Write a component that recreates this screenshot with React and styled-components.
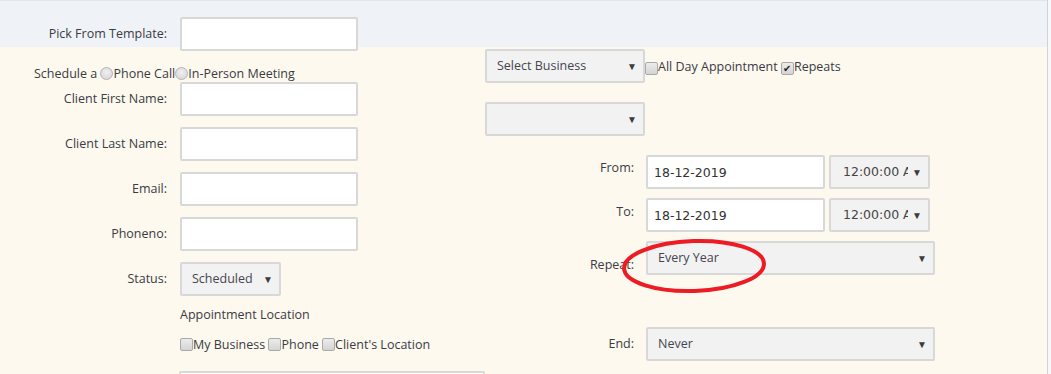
import React from 'react'
import styled, { createGlobalStyle } from 'styled-components'

const GlobalStyle = createGlobalStyle`
  html, body {
    margin: 0;
    overflow: hidden;
  }
  body {
    font-family: "Open Sans", "Noto Sans", sans-serif;
    font-size: 12.5px;
    color: #3b3b44;
  }
`

const Select = ({ width, children }) => (
  <SelectBox width={width}>
    <SelectText>{children}</SelectText>
    <Arrow>▼</Arrow>
  </SelectBox>
)

const App = () => {
  return (
    <Page>
      <GlobalStyle />
      <Main>
        <LeftCol>
          <FieldRow>
            <Label>Pick From Template:</Label>
            <TextInput />
          </FieldRow>
          <ScheduleLine>
            Schedule a&nbsp;<Radio />Phone Call<Radio />In-Person Meeting
          </ScheduleLine>
          <FieldRow>
            <Label>Client First Name:</Label>
            <TextInput />
          </FieldRow>
          <FieldRow gap={11}>
            <Label>Client Last Name:</Label>
            <TextInput />
          </FieldRow>
          <FieldRow gap={11}>
            <Label>Email:</Label>
            <TextInput />
          </FieldRow>
          <FieldRow gap={11}>
            <Label>Phoneno:</Label>
            <TextInput />
          </FieldRow>
          <FieldRow gap={11}>
            <Label>Status:</Label>
            <Select width={101}>Scheduled</Select>
          </FieldRow>
          <Indented gap={9}>Appointment Location</Indented>
          <Indented gap={12}>
            <Check />My Business <Check />Phone <Check />Client's Location
          </Indented>
          <WideInput />
        </LeftCol>

        <RightCol>
          <BusinessRow>
            <Select width={160}>Select Business</Select>
            <Check />All Day Appointment <Check checked />Repeats
          </BusinessRow>
          <EmptyRow>
            <Select width={160} />
          </EmptyRow>
          <RightRow gap={19}>
            <RightLabel offset={4}>From:</RightLabel>
            <Pair>
              <DateInput>18-12-2019</DateInput>
              <Select width={101}>
                <TimeText>12:00:00 AM</TimeText>
              </Select>
            </Pair>
          </RightRow>
          <RightRow gap={9}>
            <RightLabel offset={5}>To:</RightLabel>
            <Pair>
              <DateInput>18-12-2019</DateInput>
              <Select width={101}>
                <TimeText>12:00:00 AM</TimeText>
              </Select>
            </Pair>
          </RightRow>
          <RightRow gap={9}>
            <RightLabel offset={15}>Repeat:</RightLabel>
            <Select width={289}>Every Year</Select>
          </RightRow>
          <RightRow gap={52}>
            <RightLabel offset={8}>End:</RightLabel>
            <Select width={289}>Never</Select>
          </RightRow>
        </RightCol>

        <Circle viewBox="0 0 150 60">
          <ellipse
            cx="75"
            cy="30"
            rx="70"
            ry="25"
            fill="none"
            stroke="#ed1c24"
            strokeWidth="4"
          />
        </Circle>
      </Main>
      <Side />
    </Page>
  )
}

const Page = styled.div`
  display: flex;
  height: 374px;
  overflow: hidden;
`

const Main = styled.div`
  position: relative;
  flex: 0 0 1047px;
  box-sizing: border-box;
  border-top: 1px solid #e3e7eb;
  background: linear-gradient(#eff3f7 0, #eff3f7 46px, #fdf9ef 46px);
  display: grid;
  grid-template-columns: 485px 1fr;
  align-items: start;
`

const Side = styled.div`
  flex: 1;
  border-left: 1px solid #d3d3d3;
  background: #f6f8fa;
`

const LeftCol = styled.div`
  display: flex;
  flex-direction: column;
  padding-top: 16px;
`

const FieldRow = styled.div`
  display: grid;
  grid-template-columns: 167px auto;
  column-gap: 13px;
  align-items: center;
  margin-top: ${(p) => p.gap || 0}px;
`

const Label = styled.div`
  text-align: right;
  line-height: 18px;
`

const TextInput = styled.div`
  width: 178px;
  height: 34px;
  box-sizing: border-box;
  border: 2px solid #d8d8d8;
  border-radius: 2px;
  background: #fff;
`

const ScheduleLine = styled.div`
  display: flex;
  align-items: center;
  height: 18px;
  padding-left: 34px;
  margin-top: 13px;
  white-space: nowrap;
`

const Indented = styled.div`
  display: flex;
  align-items: center;
  height: 18px;
  padding-left: 180px;
  margin-top: ${(p) => p.gap}px;
  white-space: pre;
`

const WideInput = styled.div`
  margin: 18px 0 0 179px;
  width: 306px;
  height: 34px;
  box-sizing: border-box;
  border: 2px solid #d8d8d8;
  border-radius: 2px;
  background: #fff;
`

const Radio = styled.span`
  display: inline-block;
  width: 11px;
  height: 11px;
  border-radius: 50%;
  border: 1px solid #b4b4b4;
  background: radial-gradient(circle at 50% 40%, #f0f0f0, #d2d2d2);
`

const Check = styled.span`
  display: inline-flex;
  align-items: center;
  justify-content: center;
  width: 11px;
  height: 11px;
  border-radius: 2px;
  border: 1px solid #a9a9a9;
  background: linear-gradient(#ececec, #d4d4d4);
  font-size: 10px;
  line-height: 1;
  color: #222;
  &::after {
    content: '${(p) => (p.checked ? '✔' : '')}';
  }
`

const RightCol = styled.div`
  display: flex;
  flex-direction: column;
  padding-top: 48px;
`

const BusinessRow = styled.div`
  display: flex;
  align-items: center;
  white-space: pre;
  & > span {
    margin-top: 4px;
  }
`

const EmptyRow = styled.div`
  margin-top: 19px;
`

const RightRow = styled.div`
  display: grid;
  grid-template-columns: 149px auto;
  column-gap: 12px;
  align-items: start;
  margin-top: ${(p) => p.gap}px;
`

const RightLabel = styled.div`
  text-align: right;
  line-height: 18px;
  padding-top: ${(p) => p.offset}px;
`

const Pair = styled.div`
  display: flex;
  gap: 4px;
`

const SelectBox = styled.div`
  width: ${(p) => p.width}px;
  height: 34px;
  box-sizing: border-box;
  border: 2px solid #d8d8d8;
  border-radius: 2px;
  background: #f2f2f2;
  display: flex;
  align-items: center;
  padding: 0 6px 0 10px;
  color: #45454f;
`

const SelectText = styled.span`
  flex: 1;
  min-width: 0;
  overflow: hidden;
  white-space: nowrap;
  margin-top: -2px;
`

const Arrow = styled.span`
  flex: none;
  font-size: 10px;
  color: #3c3c3c;
  margin-left: 4px;
  margin-top: -1px;
`

const DateInput = styled.div`
  width: 179px;
  height: 34px;
  box-sizing: border-box;
  border: 2px solid #d8d8d8;
  border-radius: 2px;
  background: #fff;
  padding: 0 6px;
  display: flex;
  align-items: center;
  font-family: "DejaVu Sans", sans-serif;
  font-size: 12.5px;
  color: #333;
`

const TimeText = styled.span`
  display: block;
  width: 65px;
  margin-left: 2px;
  overflow: hidden;
  white-space: nowrap;
  font-family: "DejaVu Sans", sans-serif;
  font-size: 12.5px;
  color: #444;
`

const Circle = styled.svg`
  position: absolute;
  left: 619px;
  top: 235px;
  width: 150px;
  height: 60px;
  transform: rotate(-2deg);
`

export default App
